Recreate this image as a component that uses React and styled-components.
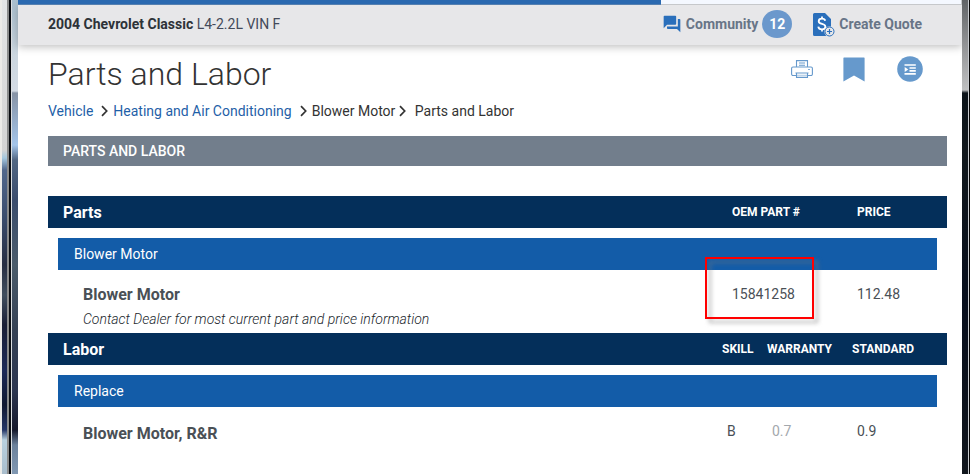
import React from "react"
import styled, { createGlobalStyle } from "styled-components";
import { MdForum } from "react-icons/md";

const GlobalStyle = createGlobalStyle`
  *, *::after {
    box-sizing: border-box;
  }
  body {
    margin: 0;
    background: #fff;
    color: #333;
    font-family: Roboto, "Liberation Sans", sans-serif;
    font-size: 14px;
  }
`;

const Wrapper = styled.div`
  display: flex;
  min-height: 100vh;
`;

const Edge = styled.div`
  display: flex;
  flex: none;
`;

const Strip = styled.div`
  width: ${props => props.$width}px;
  background: ${props => props.$fill};
`;

const Main = styled.div`
  flex: 1;
  min-width: 0;
`;

const TabStrip = styled.div`
  display: flex;
  height: 5px;
`;

const ActiveTab = styled.div`
  flex: 15;
  background: #2a69b0;
  border-bottom: 1px solid #5580b0;
`;

const TabRest = styled.div`
  flex: 7;
  background: #f4f8ff;
  border-bottom: 1px solid #c6c8cb;
  border-right: 1px solid #c6c8cb;
`;

const Header = styled.header`
  display: flex;
  align-items: center;
  justify-content: space-between;
  height: 40px;
  padding: 0 40px 2px 30px;
  background: #e7e7e9;
  box-shadow: 0 2px 8px rgba(0, 0, 0, 0.25);
`;

const VehicleName = styled.div`
  color: #444a5a;

  strong {
    font-weight: 700;
    color: #2d3238;
  }
`;

const HeaderActions = styled.div`
  display: flex;
  align-items: center;
  gap: 20px;
`;

const HeaderButton = styled.button`
  display: flex;
  align-items: center;
  gap: 4px;
  padding: 0;
  border: none;
  background: none;
  color: #687587;
  font: inherit;
  font-weight: 700;
  cursor: pointer;
`;

const Badge = styled.span`
  width: 30px;
  height: 28px;
  border-radius: 50%;
  background: #6b98cc;
  color: white;
  line-height: 28px;
  text-align: center;
`;

const Content = styled.main`
  padding: 8px 15px 20px 30px;
`;

const TitleRow = styled.div`
  display: flex;
  align-items: flex-start;
  justify-content: space-between;
`;

const Title = styled.h1`
  margin: 0;
  font-size: 32px;
  line-height: 42px;
  font-weight: 300;
`;

const Tools = styled.div`
  display: flex;
  align-items: center;
  gap: 30px;
  padding: 3px 24px 0 0;
`;

const ToolButton = styled.button`
  display: flex;
  padding: 0;
  border: none;
  background: none;
  color: #6699cc;
  cursor: pointer;
`;

const Breadcrumb = styled.nav`
  display: flex;
  align-items: center;
  gap: 4px;
  height: 32px;
  white-space: pre;

  a {
    color: #1f5fa8;
    text-decoration: none;
    margin-right: 4px;
  }
`;

const Banner = styled.h2`
  margin: 9px 0 30px;
  padding: 0 15px;
  background: #727e8c;
  color: white;
  font-size: 14px;
  line-height: 30px;
  font-weight: 500;
`;

const Table = styled.table`
  width: 100%;
  table-layout: fixed;
  border-collapse: collapse;
  color: #4a5056;
`;

const Col = styled.col`
  width: ${props => props.$width}px;
`;

const HeadCell = styled.th`
  height: 32px;
  padding: 0;
  background: #042f5a;
  color: white;
  font-size: 12px;
  font-weight: 700;
  text-align: left;
`;

const SectionCell = styled(HeadCell)`
  padding-left: 15px;
  font-size: 16px;
`;

const GroupCell = styled.th`
  padding: 10px 10px 0;
  text-align: left;
`;

const GroupBar = styled.div`
  padding-left: 16px;
  background: #135ca8;
  color: white;
  font-weight: 400;
  line-height: 32px;
`;

const NameCell = styled.th`
  padding: ${props => props.$loose ? 16 : 14}px 0 4px 35px;
  text-align: left;
  font-weight: 400;
`;

const PartName = styled.div`
  font-size: 16px;
  line-height: 22px;
  font-weight: 700;
`;

const Note = styled.div`
  padding-top: 4px;
  font-size: 14px;
  line-height: 19px;
  font-style: italic;
  font-weight: 300;
  color: #20262c;
`;

const ValueCell = styled.td`
  padding: 14px 0 0 ${props => props.$indent || 0}px;
  vertical-align: top;
  line-height: 20px;
  color: ${props => props.$muted ? "#a3a8ad" : "inherit"};
`;

const Marked = styled.span`
  position: relative;

  &::after {
    content: "";
    position: absolute;
    top: -29px;
    left: -27px;
    width: 109px;
    height: 62px;
    border: 2px solid #f00;
    filter: drop-shadow(4px 4px 2px rgba(120, 120, 120, 0.6));
    pointer-events: none;
  }
`;

const Chevron = () => (
  <svg width="8" height="12" viewBox="0 0 8 12" fill="none" stroke="#333" strokeWidth="1.7" aria-hidden="true">
    <path d="M1 1.2L5.700 6 1 10.800" />
  </svg>
);

const QuoteIcon = () => (
  <svg width="23" height="25" viewBox="0 0 23 25" aria-hidden="true">
    <path d="M2.5 1H13l6 6v17H2.5A1.5 1.5 0 0 1 1 22.500V2.500A1.500 1.500 0 0 1 2.500 1z" fill="#2a6fbb" />
    <path d="M13.200 8.800C12.900 7.400 11.800 6.700 9.900 6.700c-2 0-3.200.9-3.200 2.500 0 3.700 6.700 1.800 6.700 5.500 0 1.700-1.400 2.600-3.400 2.600-2.200 0-3.500-.9-3.700-2.700M10 4.500v2.500M10 17v2.500" fill="none" stroke="#fff" strokeWidth="1.800" />
    <circle cx="17.500" cy="19.500" r="5.200" fill="#e7e7e9" />
    <circle cx="17.500" cy="19.500" r="4.500" fill="#e7e7e9" stroke="#2a6fbb" />
    <path d="M17.500 17v5M15 19.500h5" stroke="#2a6fbb" strokeWidth="1.200" />
  </svg>
);

const PrintIcon = () => (
  <svg width="22" height="18" viewBox="0 0 22 18" fill="none" stroke="currentColor" strokeWidth="1.100" aria-hidden="true">
    <path d="M5.500 7V.6h11V7M8 3h6M8 5.300h6" />
    <path d="M5 15.500H2a1.400 1.400 0 0 1-1.400-1.400V8.400A1.400 1.400 0 0 1 2 7h18a1.400 1.400 0 0 1 1.400 1.400v5.700a1.400 1.400 0 0 1-1.400 1.400h-3" />
    <path d="M4.500 13h13M5.500 13v4.400h11V13M17.200 9.500h1.600" />
    <path d="M6 15.300h10" opacity="0.5" />
  </svg>
);

const BookmarkIcon = () => (
  <svg width="24" height="25" viewBox="0 0 24 25" aria-hidden="true">
    <path d="M1 .5h20a.6.6 0 0 1 .6.6V24.500L11 18.500.4 24.500V1.100A.6.6 0 0 1 1 .5z" fill="currentColor" />
  </svg>
);

const IndentIcon = () => (
  <svg width="26" height="26" viewBox="0 0 26 26" aria-hidden="true">
    <circle cx="13" cy="13" r="12.800" fill="currentColor" />
    <path d="M7.500 9h11.300M12.500 12h6.300M12.500 14.800h6.300M7.500 17.800h11.300" stroke="#fff" strokeWidth="1.700" />
    <path d="M7.700 10.900l3.500 2.600-3.500 2.600z" fill="#fff" />
  </svg>
);

const photoLeft = "linear-gradient(#e3e5e6 0, #d4d4d4 150px, #a5c8df 158px, #52688c 170px, #3a4b6b 220px, #272e42 265px, #414f5e 295px, #1a1f36 325px, #1d2a58 370px, #111831 405px, #263767 430px, #b9d1df 440px, #a9bdcc 100%)";
const photoRight = "linear-gradient(#aabfce 0, #cbd6df 55px, #d4dbe4 91px, #8793a5 93px, #a4c5ea 145px, #526783 160px, #3b4d6d 200px, #4b5c6b 265px, #364255 330px, #2c3650 390px, #15182b 430px, #6c829c 445px, #8198b2 100%)";
const photoWindow = "linear-gradient(#606366 0, #929395 45px, #bfc0c1 90px, #0c141a 93px, #12191d 150px, #070e1c 300px, #11161d 100%)";

const partRows = [
  { name: "Blower Motor", note: "Contact Dealer for most current part and price information", oem: "15841258", price: "112.48" },
];

const laborRows = [
  { name: "Blower Motor, R&R", skill: "B", warranty: "0.7", standard: "0.9" },
];

const PartsTable = () => (
  <Table>
    <colgroup>
      <col />
      <Col $width={125} />
      <Col $width={90} />
    </colgroup>
    <thead>
      <tr>
        <SectionCell scope="col">Parts</SectionCell>
        <HeadCell scope="col">OEM PART #</HeadCell>
        <HeadCell scope="col">PRICE</HeadCell>
      </tr>
    </thead>
    <tbody>
      <tr>
        <GroupCell colSpan={3} scope="colgroup"><GroupBar>Blower Motor</GroupBar></GroupCell>
      </tr>
      {partRows.map(row => (
        <tr key={row.oem}>
          <NameCell scope="row">
            <PartName>{row.name}</PartName>
            <Note>{row.note}</Note>
          </NameCell>
          <ValueCell><Marked>{row.oem}</Marked></ValueCell>
          <ValueCell>{row.price}</ValueCell>
        </tr>
      ))}
    </tbody>
  </Table>
);

const LaborTable = () => (
  <Table>
    <colgroup>
      <col />
      <Col $width={45} />
      <Col $width={85} />
      <Col $width={95} />
    </colgroup>
    <thead>
      <tr>
        <SectionCell scope="col">Labor</SectionCell>
        <HeadCell scope="col">SKILL</HeadCell>
        <HeadCell scope="col">WARRANTY</HeadCell>
        <HeadCell scope="col">STANDARD</HeadCell>
      </tr>
    </thead>
    <tbody>
      <tr>
        <GroupCell colSpan={4} scope="colgroup"><GroupBar>Replace</GroupBar></GroupCell>
      </tr>
      {laborRows.map(row => (
        <tr key={row.name}>
          <NameCell scope="row" $loose>
            <PartName>{row.name}</PartName>
          </NameCell>
          <ValueCell $indent={5}>{row.skill}</ValueCell>
          <ValueCell $indent={5} $muted>{row.warranty}</ValueCell>
          <ValueCell $indent={5}>{row.standard}</ValueCell>
        </tr>
      ))}
    </tbody>
  </Table>
);

const App = () => {
  return (
    <>
      <GlobalStyle />
      <Wrapper>
        <Edge>
          <Strip $width={2} $fill="#ecebe8" />
          <Strip $width={5} $fill={photoLeft} />
          <Strip $width={2} $fill="#8b8c8c" />
          <Strip $width={2} $fill="#080b10" />
          <Strip $width={1} $fill="#dcdfe2" />
          <Strip $width={6} $fill={photoRight} />
        </Edge>
        <Main>
          <TabStrip>
            <ActiveTab />
            <TabRest />
          </TabStrip>
          <Header>
            <VehicleName><strong>2004 Chevrolet Classic</strong> L4-2.2L VIN F</VehicleName>
            <HeaderActions>
              <HeaderButton type="button">
                <MdForum size={20} color="#2a6fbb" />
                Community
                <Badge>12</Badge>
              </HeaderButton>
              <HeaderButton type="button">
                <QuoteIcon />
                Create Quote
              </HeaderButton>
            </HeaderActions>
          </Header>
          <Content>
            <TitleRow>
              <Title>Parts and Labor</Title>
              <Tools>
                <ToolButton type="button" aria-label="Print"><PrintIcon /></ToolButton>
                <ToolButton type="button" aria-label="Bookmark"><BookmarkIcon /></ToolButton>
                <ToolButton type="button" aria-label="Contents"><IndentIcon /></ToolButton>
              </Tools>
            </TitleRow>
            <Breadcrumb aria-label="Breadcrumb">
              <a href="#vehicle">Vehicle</a>
              <Chevron />
              <a href="#hvac">Heating and Air Conditioning</a>
              <Chevron />
              <span>Blower Motor</span>
              <Chevron />
              <span> Parts and Labor</span>
            </Breadcrumb>
            <Banner>PARTS AND LABOR</Banner>
            <PartsTable />
            <LaborTable />
          </Content>
        </Main>
        <Edge>
          <Strip $width={6} $fill={photoWindow} />
          <Strip $width={1} $fill="#c9ccd0" />
          <Strip $width={1} $fill="#050505" />
        </Edge>
      </Wrapper>
    </>
  )
}

export default App;
